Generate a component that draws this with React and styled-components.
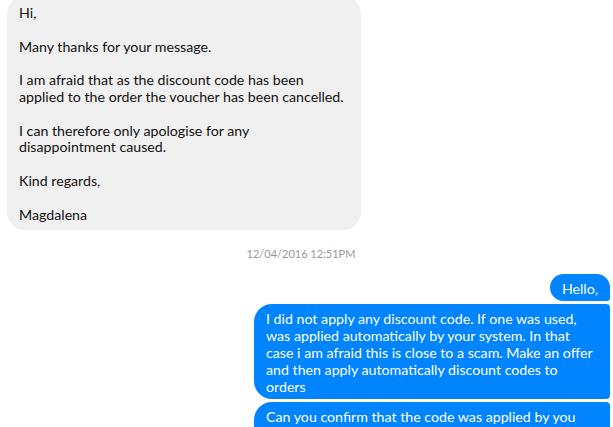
import React from "react";
import styled, { createGlobalStyle } from "styled-components";

const GlobalStyle = createGlobalStyle`
	html, body {
		margin: 0;
		padding: 0;
		background: #ffffff;
		overflow: hidden;
	}
	body {
		font-family: "Lato", "Liberation Sans", sans-serif;
	}
`;

const incoming = [
	"Hi,",
	"",
	"Many thanks for your message.",
	"",
	"I am afraid that as the discount code has been",
	"applied to the order the voucher has been cancelled.",
	"",
	"I can therefore only apologise for any",
	"disappointment caused.",
	"",
	"Kind regards,",
	"",
	"Magdalena",
].join("\n");

const outgoing = [
	{ id: 1, text: "Hello,", first: true },
	{
		id: 2,
		wide: true,
		text: [
			"I did not apply any discount code. If one was used,",
			"was applied automatically by your system. In that",
			"case i am afraid this is close to a scam. Make an offer",
			"and then apply automatically discount codes to",
			"orders",
		].join("\n"),
	},
	{ id: 3, wide: true, text: "Can you confirm that the code was applied by you\nautomatically?" },
];

const App = () => {
	return (
		<>
			<GlobalStyle />
			<Thread>
				<Bubble $from="them">{incoming}</Bubble>
				<Timestamp>12/04/2016 12:51PM</Timestamp>
				<OutGroup>
					{outgoing.map((m) => (
						<Bubble key={m.id} $from="me" $first={m.first} $wide={m.wide}>
							{m.text}
						</Bubble>
					))}
				</OutGroup>
			</Thread>
		</>
	);
};

export default App;

const Thread = styled.div`
	display: flex;
	flex-direction: column;
	padding: 0 3px 0 7px;
	margin-top: -4px;
	width: 613px;
	box-sizing: border-box;
`;

const Bubble = styled.div`
	box-sizing: border-box;
	white-space: pre;
	font-size: 14.2px;
	line-height: ${(p) => (p.$from === "me" ? "17px" : "16.8px")};
	padding: ${(p) => (p.$from === "me" ? "6px 12px 4px" : "9px 12px 7px")};
	width: ${(p) => (p.$from === "them" ? "354px" : p.$wide ? "356px" : "fit-content")};
	align-self: ${(p) => (p.$from === "me" ? "flex-end" : "flex-start")};
	background: ${(p) => (p.$from === "me" ? "#0084ff" : "#f1f0f0")};
	color: ${(p) => (p.$from === "me" ? "#ffffff" : "#111111")};
	border-radius: ${(p) =>
		p.$from === "me"
			? p.$first
				? "18px 18px 4px 18px"
				: "18px 4px 4px 18px"
			: "18px"};
`;

const Timestamp = styled.div`
	font-size: 11px;
	color: #999999;
	text-align: center;
	padding: 17px 15px 13px 0;
	line-height: 14px;
`;

const OutGroup = styled.div`
	display: flex;
	flex-direction: column;
	gap: 3px;
`;
